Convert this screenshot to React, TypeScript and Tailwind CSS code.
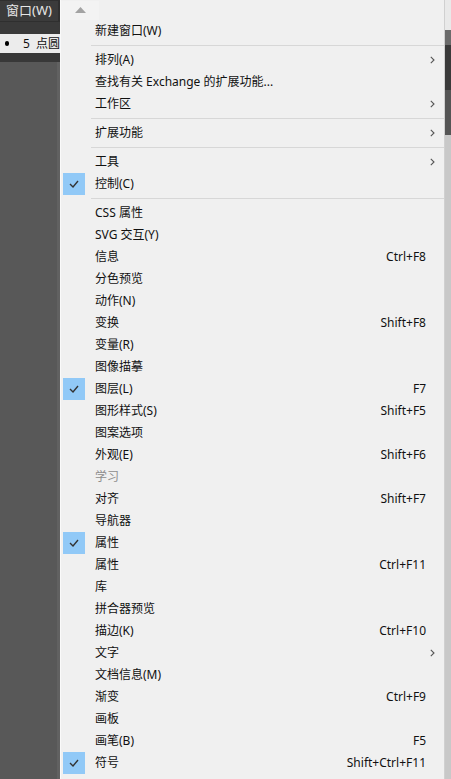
import React from "react";

type Item =
  | { sep: true }
  | { label: string; shortcut?: string; sub?: boolean; checked?: boolean; disabled?: boolean };

const items: Item[] = [
  { label: "新建窗口(W)" },
  { sep: true },
  { label: "排列(A)", sub: true },
  { label: "查找有关 Exchange 的扩展功能..." },
  { label: "工作区", sub: true },
  { sep: true },
  { label: "扩展功能", sub: true },
  { sep: true },
  { label: "工具", sub: true },
  { label: "控制(C)", checked: true },
  { sep: true },
  { label: "CSS 属性" },
  { label: "SVG 交互(Y)" },
  { label: "信息", shortcut: "Ctrl+F8" },
  { label: "分色预览" },
  { label: "动作(N)" },
  { label: "变换", shortcut: "Shift+F8" },
  { label: "变量(R)" },
  { label: "图像描摹" },
  { label: "图层(L)", shortcut: "F7", checked: true },
  { label: "图形样式(S)", shortcut: "Shift+F5" },
  { label: "图案选项" },
  { label: "外观(E)", shortcut: "Shift+F6" },
  { label: "学习", disabled: true },
  { label: "对齐", shortcut: "Shift+F7" },
  { label: "导航器" },
  { label: "属性", checked: true },
  { label: "属性", shortcut: "Ctrl+F11" },
  { label: "库" },
  { label: "拼合器预览" },
  { label: "描边(K)", shortcut: "Ctrl+F10" },
  { label: "文字", sub: true },
  { label: "文档信息(M)" },
  { label: "渐变", shortcut: "Ctrl+F9" },
  { label: "画板" },
  { label: "画笔(B)", shortcut: "F5" },
  { label: "符号", shortcut: "Shift+Ctrl+F11", checked: true },
];

function Check() {
  return (
    <div className="w-[22px] h-[22px] bg-[#91c9f7] flex items-center justify-center">
      <svg width="10" height="8" viewBox="0 0 10 8">
        <path d="M1 4 L4 7 L9 1" fill="none" stroke="#333" strokeWidth="1.4" />
      </svg>
    </div>
  );
}

function Chevron() {
  return (
    <svg width="5" height="8" viewBox="0 0 5 8">
      <path d="M0.8 0.8 L4 4 L0.8 7.2" fill="none" stroke="#555" strokeWidth="1.1" />
    </svg>
  );
}

export default function App() {
  return (
    <div
      className="flex h-[779px] w-[451px] overflow-hidden bg-[#535353] text-[12px]"
      style={{ fontFamily: '"Noto Sans", "Noto Sans CJK SC", sans-serif' }}
    >
      {/* app behind the menu */}
      <div className="w-[60px] shrink-0 flex flex-col overflow-hidden">
        <div className="h-[22px] shrink-0 bg-[#2f2f2f] flex items-center">
          <div className="h-[20px] w-[58px] bg-[#3b3b3b] flex items-center pl-[6px] text-[#e6e6e6] text-[13px] whitespace-nowrap">
            窗口(W)
          </div>
        </div>
        <div className="h-[12px] shrink-0 bg-[#3a3a3a]" />
        <div className="h-[19px] shrink-0 bg-[#ececec] flex items-center whitespace-nowrap text-[#111]">
          <span className="ml-[5px] w-[5px] h-[5px] rounded-full bg-black" />
          <span className="ml-[14px]">5</span>
          <span className="ml-[6px]">点圆</span>
        </div>
        <div className="h-[9px] shrink-0 bg-[#383838]" />
        <div className="flex-1 bg-[#585858] border-r-[3px] border-[#616161]" />
      </div>

      {/* menu */}
      <div className="w-[385px] shrink-0 bg-[#f0f0f0] border-l border-[#fafafa] border-r border-r-[#d0d0d0] flex flex-col">
        <div className="h-[20px] shrink-0 flex items-center">
          <div className="w-[38px] h-[19px] bg-[#f3f3f3] flex items-center justify-center">
            <svg width="11" height="6" viewBox="0 0 11 6">
              <path d="M0 6 L5.5 0 L11 6 Z" fill="#a3a3a3" />
            </svg>
          </div>
        </div>
        {items.map((it, i) =>
          "sep" in it ? (
            <div key={i} className="h-[7px] shrink-0 flex items-center pl-[30px]">
              <div className="h-px w-full bg-[#d7d7d7]" />
            </div>
          ) : (
            <div key={i} className="h-[22px] shrink-0 flex items-center pl-[2px]">
              <div className="w-[22px] h-[22px]">{it.checked && <Check />}</div>
              <div
                className={
                  "ml-[10px] flex-1 whitespace-nowrap " +
                  (it.disabled ? "text-[#8d8d8d]" : "text-[#111]")
                }
              >
                {it.label}
              </div>
              {it.shortcut && <div className="pr-[18px] text-[#111] whitespace-nowrap">{it.shortcut}</div>}
              {it.sub && (
                <div className="pr-[9px] flex items-center">
                  <Chevron />
                </div>
              )}
            </div>
          )
        )}
      </div>

      {/* sliver of the app on the right */}
      <div className="flex-1 flex flex-col">
        <div className="h-[30px] shrink-0 bg-[#e9e9e9]" />
        <div className="h-[15px] shrink-0 bg-[#6b6b6b]" />
        <div className="h-[45px] shrink-0 bg-[#3a3a3a]" />
        <div className="h-[45px] shrink-0 bg-[#555555]" />
        <div className="flex-1 bg-[#c8c8c8]" />
      </div>
    </div>
  );
}
